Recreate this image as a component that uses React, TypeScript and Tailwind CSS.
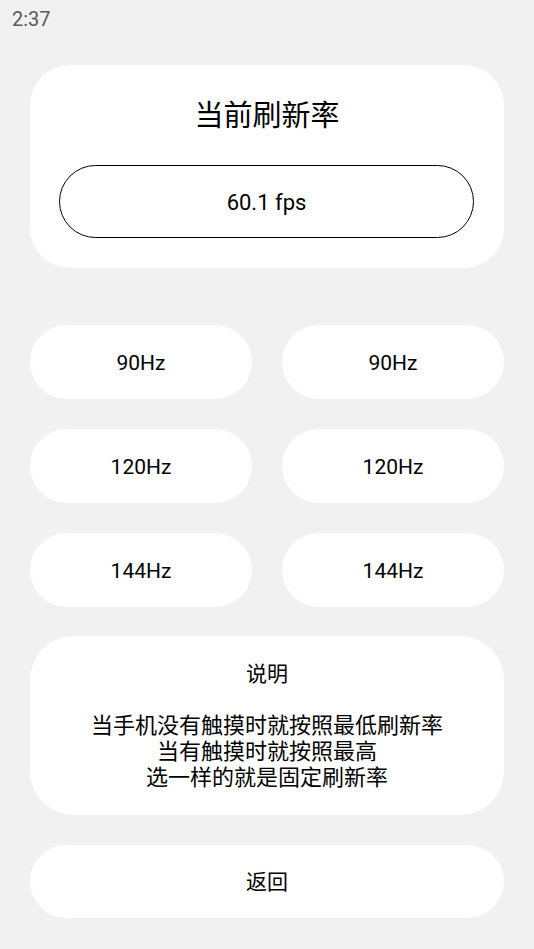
import React from 'react';

const font = { fontFamily: 'Roboto, "Noto Sans CJK SC", sans-serif' };

const rates = [
  ['90Hz', '90Hz'],
  ['120Hz', '120Hz'],
  ['144Hz', '144Hz'],
];

export default function App() {
  return (
    <div className="w-full min-h-screen bg-[#f1f1f1] text-black" style={font}>
      <div className="h-[37px] px-[12px] flex items-center text-[20px] text-[#5a5a5a]">2:37</div>

      <div className="mx-[30px] mt-[28px] bg-white rounded-[40px] pt-[31px] pb-[30px] flex flex-col items-center">
        <div className="h-[40px] leading-[40px] text-[29px]">当前刷新率</div>
        <div className="mt-[29px] w-[calc(100%-59px)] ml-[-1px] h-[73px] rounded-full border-[1.5px] border-black flex items-center justify-center text-[22px] pt-[2px]">
          60.1 fps
        </div>
      </div>

      <div className="mx-[30px] mt-[57px] grid grid-cols-2 gap-x-[30px] gap-y-[30px]">
        {rates.flat().map((r, i) => (
          <button key={i} className="h-[74px] bg-white rounded-full flex items-center justify-center text-[21px] pt-[3px]">
            {r}
          </button>
        ))}
      </div>

      <div className="mx-[30px] mt-[29px] h-[179px] bg-white rounded-[44px] flex flex-col items-center text-[22px] leading-[26px] text-center">
        <div className="mt-[25px] text-[21px]">说明</div>
        <div className="mt-[26px]">
          <div>当手机没有触摸时就按照最低刷新率</div>
          <div>当有触摸时就按照最高</div>
          <div>选一样的就是固定刷新率</div>
        </div>
      </div>

      <button className="mx-[30px] mt-[30px] w-[calc(100%-60px)] h-[73px] bg-white rounded-full flex items-center justify-center text-[21px] pt-[2px]">
        返回
      </button>
    </div>
  );
}
